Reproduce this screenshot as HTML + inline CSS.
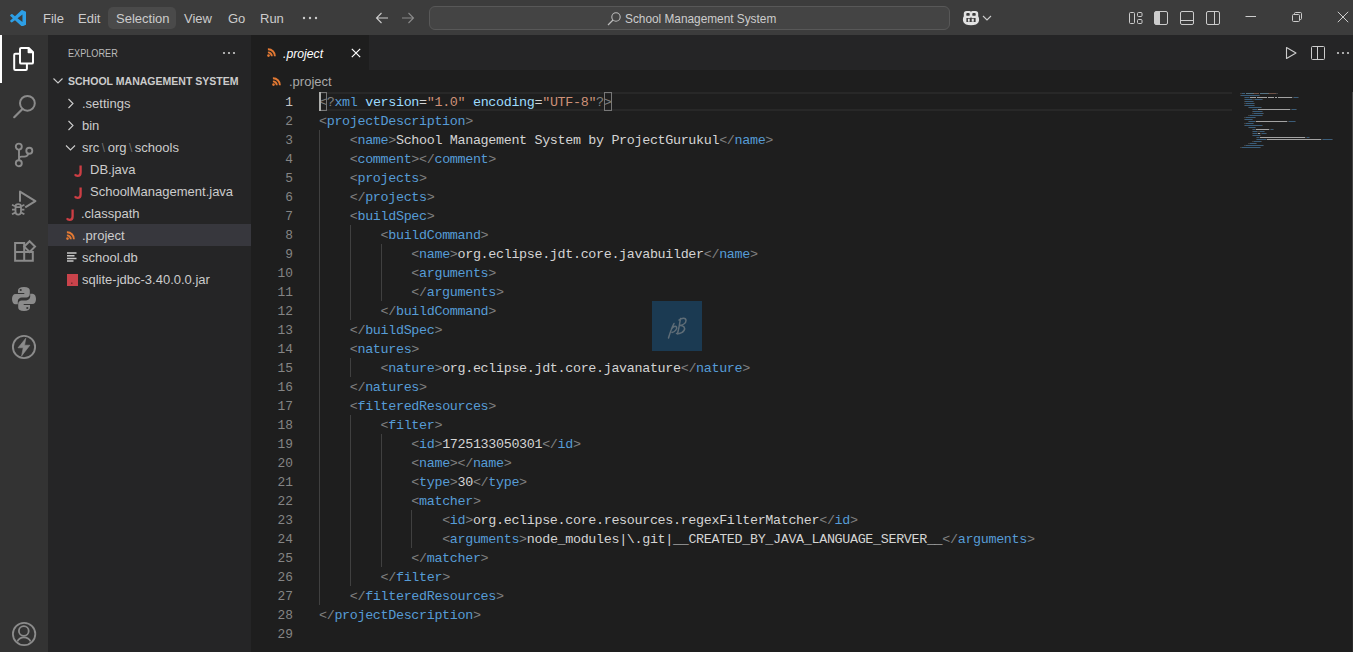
<!DOCTYPE html>
<html><head><meta charset="utf-8">
<style>
*{margin:0;padding:0;box-sizing:border-box}
html,body{width:1353px;height:652px;overflow:hidden;background:#1e1e1e;font-family:"Liberation Sans",sans-serif;}
.abs{position:absolute}
#title{position:absolute;left:0;top:0;width:1353px;height:35px;background:#3c3c3c;color:#cccccc;font-size:13px}
.menu{position:absolute;top:10px;line-height:18px;color:#cccccc}
#act{position:absolute;left:0;top:35px;width:48px;height:617px;background:#333333}
#side{position:absolute;left:48px;top:35px;width:203px;height:617px;background:#252526;color:#cccccc;font-size:13px}
#editor{position:absolute;left:251px;top:35px;width:1102px;height:617px;background:#1e1e1e}
#tabs{position:absolute;left:0;top:0;width:1102px;height:35px;background:#252526}
.row{position:absolute;left:0;width:203px;height:22px;line-height:24px;white-space:nowrap}
#code{position:absolute;left:68px;top:58px;font-family:"Liberation Mono",monospace;font-size:13.4px;letter-spacing:-0.341px;line-height:19px;white-space:pre;color:#d4d4d4}
#code i{font-style:normal}
.p{color:#808080}.t{color:#569cd6}.a{color:#9cdcfe}.e{color:#d4d4d4}.v{color:#ce9178}.x{color:#d4d4d4}
.ln{height:19px}
#nums{position:absolute;left:0;top:58px;width:42px;text-align:right;font-family:"Liberation Mono",monospace;font-size:12.83px;line-height:19px;color:#858585}
#guides{position:absolute;left:68px;top:57px}
.g{position:absolute;width:1px;background:#404040}
#mm{position:absolute;left:989px;top:57px}
#mm div{position:absolute;height:1px;margin-top:0.5px}
</style></head><body>
<div id="title">
  <svg class="abs" style="left:9.5px;top:9.7px" width="16.7" height="16.5" viewBox="0 0 100 100"><path d="M96.46 10.8 75.86.87a6.23 6.23 0 0 0-7.1 1.21L29.55 37.85 12.46 24.88a4.16 4.16 0 0 0-5.32.24L1.63 30.13a4.16 4.16 0 0 0 0 6.16L16.45 49.8 1.63 63.31a4.16 4.16 0 0 0 0 6.16l5.51 5.01a4.16 4.16 0 0 0 5.32.24l17.09-12.97 39.21 35.77a6.22 6.22 0 0 0 7.1 1.21l20.6-9.92A6.25 6.25 0 0 0 100 83.18V16.42a6.25 6.25 0 0 0-3.54-5.62ZM75.01 72.7 45.11 49.8l29.9-22.9v45.8Z" fill="#2d9fe6"/></svg>
  <div class="menu" style="left:43px">File</div>
  <div class="menu" style="left:78px">Edit</div>
  <div class="abs" style="left:108px;top:7px;width:68px;height:22px;border-radius:5px;background:#4a4a4a"></div>
  <div class="menu" style="left:116px">Selection</div>
  <div class="menu" style="left:184px">View</div>
  <div class="menu" style="left:228px">Go</div>
  <div class="menu" style="left:260px">Run</div>
  <svg class="abs" style="left:302px;top:16px" width="16" height="4"><circle cx="2" cy="2" r="1.2" fill="#ccc"/><circle cx="8" cy="2" r="1.2" fill="#ccc"/><circle cx="14" cy="2" r="1.2" fill="#ccc"/></svg>
  <svg class="abs" style="left:374px;top:10px" width="16" height="16" viewBox="0 0 16 16"><path d="M14 8H2.5 M7.5 3 L2.5 8 L7.5 13" stroke="#cccccc" stroke-width="1.1" fill="none"/></svg>
  <svg class="abs" style="left:400px;top:10px" width="16" height="16" viewBox="0 0 16 16"><path d="M2 8H13.5 M8.5 3 L13.5 8 L8.5 13" stroke="#8a8a8a" stroke-width="1.1" fill="none"/></svg>
  <div class="abs" style="left:429px;top:6px;width:521px;height:24px;border-radius:6px;background:#444444;border:1px solid #585858"></div>
  <svg class="abs" style="left:606px;top:11px" width="16" height="16" viewBox="0 0 16 16"><circle cx="10" cy="6" r="4.2" stroke="#bbbbbb" stroke-width="1.1" fill="none"/><path d="M7 9 L2 14" stroke="#bbbbbb" stroke-width="1.2"/></svg>
  <div class="menu" style="left:625px;color:#cccccc;transform:scaleX(0.91);transform-origin:0 0">School Management System</div>
  <svg class="abs" style="left:962px;top:10px" width="18" height="16" viewBox="0 0 18 16"><path fill="#e2e2e2" d="M4.6 0.9H7.4Q9 0.9 9 2.3 9 0.9 10.6 0.9H13.4Q16.2 0.9 16.2 3.7V6.2Q17.1 7.3 17.1 9.6 17.1 13.1 14 14.5 12 15.2 9 15.2 6 15.2 4 14.5 0.9 13.1 0.9 9.6 0.9 7.3 1.8 6.2V3.7Q1.8 0.9 4.6 0.9Z"/><rect x="4.3" y="3" width="3.4" height="2.8" rx="0.9" fill="#3c3c3c"/><rect x="10.3" y="3" width="3.4" height="2.8" rx="0.9" fill="#3c3c3c"/><path d="M4.4 8.1H8.3L9 7 9.7 8.1H13.6V12.1H4.4Z" fill="#3c3c3c"/><rect x="5.9" y="8.7" width="1.8" height="3" fill="#e2e2e2"/><rect x="9.7" y="8.7" width="2.1" height="3" fill="#e2e2e2"/></svg>
  <svg class="abs" style="left:982px;top:14px" width="10" height="8" viewBox="0 0 10 8"><path d="M1 2 L5 6 L9 2" stroke="#cccccc" stroke-width="1.1" fill="none"/></svg>
  <!-- layout icons -->
  <svg class="abs" style="left:1128px;top:10px" width="16" height="16" viewBox="0 0 16 16"><rect x="1.5" y="2.5" width="5" height="11" rx="1" stroke="#cccccc" fill="none"/><rect x="9.5" y="2.5" width="4.5" height="4" rx="1" stroke="#cccccc" fill="none"/><rect x="9.5" y="9.5" width="4.5" height="4" rx="1" stroke="#cccccc" fill="none"/></svg>
  <svg class="abs" style="left:1153px;top:10px" width="16" height="16" viewBox="0 0 16 16"><rect x="1.5" y="1.5" width="13" height="13" rx="1.5" stroke="#cccccc" fill="none"/><rect x="2" y="2" width="4.5" height="12" fill="#cccccc"/><path d="M6.5 2V14" stroke="#cccccc"/></svg>
  <svg class="abs" style="left:1179px;top:10px" width="16" height="16" viewBox="0 0 16 16"><rect x="1.5" y="1.5" width="13" height="13" rx="1.5" stroke="#cccccc" fill="none"/><path d="M2 10.5H14" stroke="#cccccc"/></svg>
  <svg class="abs" style="left:1205px;top:10px" width="16" height="16" viewBox="0 0 16 16"><rect x="1.5" y="1.5" width="13" height="13" rx="1.5" stroke="#cccccc" fill="none"/><path d="M9.5 2V14" stroke="#cccccc"/></svg>
  <svg class="abs" style="left:1245px;top:12px" width="12" height="10"><path d="M0.5 4.5H11" stroke="#cccccc"/></svg>
  <svg class="abs" style="left:1291px;top:11px" width="12" height="12" viewBox="0 0 12 12"><rect x="1.5" y="3.5" width="7" height="7" rx="1" stroke="#cccccc" fill="none"/><path d="M3.5 3.5V2.5C3.5 1.9 3.9 1.5 4.5 1.5H9.5C10.1 1.5 10.5 1.9 10.5 2.5V7.5C10.5 8.1 10.1 8.5 9.5 8.5H8.5" stroke="#cccccc" fill="none"/></svg>
  <svg class="abs" style="left:1337px;top:11px" width="12" height="12" viewBox="0 0 12 12"><path d="M0.8 0.8L11.2 11.2M11.2 0.8L0.8 11.2" stroke="#cccccc" stroke-width="1"/></svg>
</div>

<div id="act">
  <div class="abs" style="left:0;top:0;width:2px;height:48px;background:#ffffff"></div>
  <svg class="abs" style="left:12px;top:11px" width="24" height="26" viewBox="0 0 24 26"><path d="M9.2 1.9H16.6L21 6.3V16.4Q21 17.6 19.8 17.6H9.2Q8 17.6 8 16.4V3.1Q8 1.9 9.2 1.9Z" stroke="#ffffff" stroke-width="2" fill="none" stroke-linejoin="round"/><path d="M16.4 1.9V6.5H21Z" stroke="#ffffff" stroke-width="1.6" fill="#ffffff" stroke-linejoin="round"/><path d="M8 7.8H3.4Q2.2 7.8 2.2 9V22.8Q2.2 24 3.4 24H13.7Q14.9 24 14.9 22.8V17.6" stroke="#ffffff" stroke-width="2" fill="none" stroke-linejoin="round"/></svg>
  <svg class="abs" style="left:12px;top:59px" width="26" height="26" viewBox="0 0 26 26"><circle cx="15.4" cy="9.3" r="7.4" stroke="#8b8b8b" stroke-width="2" fill="none"/><path d="M10.2 15.2L2.2 23.2" stroke="#8b8b8b" stroke-width="2.2" stroke-linecap="round"/></svg>
  <svg class="abs" style="left:12px;top:107px" width="24" height="26" viewBox="0 0 24 26"><circle cx="6.8" cy="4.6" r="3" stroke="#8b8b8b" stroke-width="1.9" fill="none"/><circle cx="17.3" cy="8.8" r="3" stroke="#8b8b8b" stroke-width="1.9" fill="none"/><circle cx="6.8" cy="21.3" r="3" stroke="#8b8b8b" stroke-width="1.9" fill="none"/><path d="M7 7.6V18.3 M16.2 11.6C15.8 13.6 14.5 14.6 12.3 14.6H9.5C8 14.6 7 15.5 7 17" stroke="#8b8b8b" stroke-width="1.9" fill="none"/></svg>
  <svg class="abs" style="left:8px;top:151px" width="32" height="32" viewBox="0 0 32 32"><path d="M12 15.8V5.6L27.4 15.2L17.2 21.4" stroke="#8b8b8b" stroke-width="2" fill="none" stroke-linejoin="round"/><path d="M10.2 18.2C8.4 18.2 7.5 19.2 7.5 20.4V25.5C7.5 27.5 8.7 28.7 10.2 28.7 11.8 28.7 13 27.5 13 25.5V20.4C13 19.2 12 18.2 10.2 18.2Z M7.5 21.2H13" stroke="#8b8b8b" stroke-width="1.8" fill="none"/><path d="M4 18.8L7 20.2 M16.4 18.8L13.4 20.2 M4 23.6H7.3 M16.4 23.6H13.2 M4 28.2L7.2 26.6 M16.4 28.2L13.2 26.6" stroke="#8b8b8b" stroke-width="1.8"/></svg>
  <svg class="abs" style="left:8px;top:201px" width="32" height="32" viewBox="0 0 32 32"><path d="M7.1 7.1H16.2V16H24.8V24.8H7.1Z M7.1 16H16.2V24.8" stroke="#8b8b8b" stroke-width="2" fill="none"/><path d="M21.6 5.2L27 10.6L21.6 16L16.2 10.6Z" stroke="#8b8b8b" stroke-width="2" fill="none" stroke-linejoin="miter"/></svg>
  <svg class="abs" style="left:11px;top:251px" width="26" height="26" viewBox="-1 -1 26 26"><path d="M12 0C8 0 6 1.2 6 3.5V6H12.3V7H3.5C1.3 7 0 9 0 12 0 15 1.3 17.3 3.5 17.3H5.8V14.5C5.8 12.3 7.6 10.6 9.8 10.6H14.3C16.3 10.6 17.8 9.1 17.8 7.1V3.5C17.8 1.2 16 0 12 0Z" fill="#8b8b8b"/><circle cx="8.7" cy="3" r="1.1" fill="#333"/><g transform="rotate(180 12 12)"><path d="M12 0C8 0 6 1.2 6 3.5V6H12.3V7H3.5C1.3 7 0 9 0 12 0 15 1.3 17.3 3.5 17.3H5.8V14.5C5.8 12.3 7.6 10.6 9.8 10.6H14.3C16.3 10.6 17.8 9.1 17.8 7.1V3.5C17.8 1.2 16 0 12 0Z" fill="#8b8b8b"/><circle cx="8.7" cy="3" r="1.1" fill="#333"/></g></svg>
  <svg class="abs" style="left:8px;top:296px" width="32" height="32" viewBox="0 0 32 32"><circle cx="16" cy="16" r="11.1" stroke="#8b8b8b" stroke-width="1.9" fill="none"/><path d="M17.8 7.2L10 16.8H15.2L13.6 25L21.9 14.2H16.6Z" fill="#8b8b8b" stroke="#8b8b8b" stroke-width="0.6" stroke-linejoin="round"/></svg>
  <svg class="abs" style="left:8px;top:583px" width="32" height="32" viewBox="0 0 32 32"><circle cx="16.1" cy="16" r="11.2" stroke="#8b8b8b" stroke-width="1.8" fill="none"/><circle cx="15.8" cy="13" r="4.9" stroke="#8b8b8b" stroke-width="1.8" fill="none"/><path d="M9.3 23.5C10.6 20.6 13.1 19.3 15.9 19.3 18.7 19.3 21.3 20.6 22.6 23.5" stroke="#8b8b8b" stroke-width="1.8" fill="none"/></svg>
</div>

<div id="side">
  <div class="abs" style="left:20px;top:11px;font-size:11px;line-height:14px;color:#bbbbbb;transform:scaleX(0.83);transform-origin:0 0">EXPLORER</div>
  <svg class="abs" style="left:174px;top:16px" width="14" height="4"><circle cx="2" cy="2" r="1.1" fill="#ccc"/><circle cx="7" cy="2" r="1.1" fill="#ccc"/><circle cx="12" cy="2" r="1.1" fill="#ccc"/></svg>
  <svg class="abs" style="left:4px;top:42px" width="12" height="8" viewBox="0 0 12 8"><path d="M1.5 1.5L6 6L10.5 1.5" stroke="#cccccc" stroke-width="1.1" fill="none"/></svg>
  <div class="abs" style="left:20px;top:38px;font-size:11px;line-height:16px;font-weight:bold;color:#cccccc;transform:scaleX(0.957);transform-origin:0 0">SCHOOL MANAGEMENT SYSTEM</div>
  <div class="row" style="top:57px"><svg class="abs" style="left:19px;top:6px" width="8" height="11" viewBox="0 0 8 11"><path d="M1.5 1L6 5.5L1.5 10" stroke="#cccccc" stroke-width="1.1" fill="none"/></svg><span class="abs" style="left:34px">.settings</span></div>
  <div class="row" style="top:79px"><svg class="abs" style="left:19px;top:6px" width="8" height="11" viewBox="0 0 8 11"><path d="M1.5 1L6 5.5L1.5 10" stroke="#cccccc" stroke-width="1.1" fill="none"/></svg><span class="abs" style="left:34px">bin</span></div>
  <div class="row" style="top:101px"><svg class="abs" style="left:17px;top:8px" width="11" height="8" viewBox="0 0 11 8"><path d="M1 1.5L5.5 6L10 1.5" stroke="#cccccc" stroke-width="1.1" fill="none"/></svg><span class="abs" style="left:34px">src<span style="color:#6f6f6f;margin:0 2.5px 0 2.5px;font-size:12px">\</span>org<span style="color:#6f6f6f;margin:0 2.5px 0 2.5px;font-size:12px">\</span>schools</span></div>
  <div class="row" style="top:123px"><svg class="abs" style="left:26px;top:7px" width="10" height="12" viewBox="0 0 10 12"><path d="M6.6 0.6V7.4C6.6 9.6 5.3 10.8 3.6 10.8 2.4 10.8 1.4 10.2 0.9 9.2" stroke="#cc3e44" stroke-width="2.3" fill="none"/></svg><span class="abs" style="left:42px">DB.java</span></div>
  <div class="row" style="top:145px"><svg class="abs" style="left:26px;top:7px" width="10" height="12" viewBox="0 0 10 12"><path d="M6.6 0.6V7.4C6.6 9.6 5.3 10.8 3.6 10.8 2.4 10.8 1.4 10.2 0.9 9.2" stroke="#cc3e44" stroke-width="2.3" fill="none"/></svg><span class="abs" style="left:42px">SchoolManagement.java</span></div>
  <div class="row" style="top:167px"><svg class="abs" style="left:18px;top:7px" width="10" height="12" viewBox="0 0 10 12"><path d="M6.6 0.6V7.4C6.6 9.6 5.3 10.8 3.6 10.8 2.4 10.8 1.4 10.2 0.9 9.2" stroke="#cc3e44" stroke-width="2.3" fill="none"/></svg><span class="abs" style="left:33px">.classpath</span></div>
  <div class="row" style="top:189px;background:#37373d"><svg class="abs" style="left:18px;top:7px" width="9" height="9" viewBox="0 0 9 9"><path d="M0.9 1.3A6.8 6.8 0 0 1 7.9 8.3 M0.9 4.4A3.9 3.9 0 0 1 4.8 8.3" stroke="#e37933" stroke-width="1.9" fill="none"/><circle cx="1.5" cy="7.6" r="1.3" fill="#e37933"/></svg><span class="abs" style="left:34px">.project</span></div>
  <div class="row" style="top:211px"><svg class="abs" style="left:19px;top:6px" width="10" height="11" viewBox="0 0 10 11"><path d="M0 1H9.5 M0 3.7H7.5 M0 6.4H9.5 M0 9.1H6.5" stroke="#c8c8c8" stroke-width="1.5"/></svg><span class="abs" style="left:34px">school.db</span></div>
  <div class="row" style="top:233px"><svg class="abs" style="left:19px;top:6px" width="11" height="12" viewBox="0 0 11 12"><rect x="0" y="0" width="11" height="12" fill="#c9434b"/><rect x="4" y="8.5" width="1.5" height="1.5" fill="#7a2a30"/></svg><span class="abs" style="left:34px">sqlite-jdbc-3.40.0.0.jar</span></div>
</div>

<div id="editor">
  <div id="tabs">
    <div class="abs" style="left:0;top:0;width:118px;height:35px;background:#1e1e1e">
      <svg class="abs" style="left:16px;top:12.5px" width="9" height="9" viewBox="0 0 9 9"><path d="M0.9 1.3A6.8 6.8 0 0 1 7.9 8.3 M0.9 4.4A3.9 3.9 0 0 1 4.8 8.3" stroke="#e37933" stroke-width="1.9" fill="none"/><circle cx="1.5" cy="7.6" r="1.3" fill="#e37933"/></svg>
      <span class="abs" style="left:32px;top:10px;font-size:13px;line-height:18px;font-style:italic;color:#ffffff;transform:scaleX(0.94);transform-origin:0 0">.project</span>
      <svg class="abs" style="left:100px;top:13px" width="10" height="10" viewBox="0 0 10 10"><path d="M0.8 0.8L9.2 9.2M9.2 0.8L0.8 9.2" stroke="#ffffff" stroke-width="1.2"/></svg>
    </div>
    <svg class="abs" style="left:1034px;top:11px" width="12" height="14" viewBox="0 0 12 14"><path d="M1.5 1.5V12.5L11 7Z" stroke="#cccccc" stroke-width="1.1" fill="none" stroke-linejoin="round"/></svg>
    <svg class="abs" style="left:1060px;top:11px" width="14" height="14" viewBox="0 0 14 14"><rect x="0.5" y="0.5" width="13" height="13" rx="1" stroke="#cccccc" fill="none"/><path d="M6.5 1V13" stroke="#cccccc"/></svg>
    <svg class="abs" style="left:1085px;top:16px" width="14" height="4"><circle cx="2" cy="2" r="1.1" fill="#ccc"/><circle cx="7" cy="2" r="1.1" fill="#ccc"/><circle cx="12" cy="2" r="1.1" fill="#ccc"/></svg>
  </div>
  <svg class="abs" style="left:21px;top:42px" width="9" height="9" viewBox="0 0 9 9"><path d="M0.9 1.3A6.8 6.8 0 0 1 7.9 8.3 M0.9 4.4A3.9 3.9 0 0 1 4.8 8.3" stroke="#e37933" stroke-width="1.9" fill="none"/><circle cx="1.5" cy="7.6" r="1.3" fill="#e37933"/></svg>
  <span class="abs" style="left:38px;top:38px;font-size:13px;line-height:18px;color:#a9a9a9">.project</span>
  <!-- current line box -->
  <div class="abs" style="left:68px;top:57px;width:913px;height:19px;border:2px solid #282828;border-left:none;border-right:none"></div>
  <div id="guides"><div class="g" style="left:0px;top:38px;height:475px"></div>
<div class="g" style="left:31px;top:133px;height:95px"></div>
<div class="g" style="left:31px;top:266px;height:19px"></div>
<div class="g" style="left:31px;top:323px;height:171px"></div>
<div class="g" style="left:62px;top:152px;height:57px"></div>
<div class="g" style="left:62px;top:342px;height:133px"></div>
<div class="g" style="left:92px;top:418px;height:38px"></div></div>
  <div id="nums"><div class="ln" style="color:#c6c6c6">1</div><div class="ln">2</div><div class="ln">3</div><div class="ln">4</div><div class="ln">5</div><div class="ln">6</div><div class="ln">7</div><div class="ln">8</div><div class="ln">9</div><div class="ln">10</div><div class="ln">11</div><div class="ln">12</div><div class="ln">13</div><div class="ln">14</div><div class="ln">15</div><div class="ln">16</div><div class="ln">17</div><div class="ln">18</div><div class="ln">19</div><div class="ln">20</div><div class="ln">21</div><div class="ln">22</div><div class="ln">23</div><div class="ln">24</div><div class="ln">25</div><div class="ln">26</div><div class="ln">27</div><div class="ln">28</div><div class="ln">29</div></div>
  <div id="code"><div class="ln"><i class="p">&lt;?</i><i class="t">xml</i> <i class="a">version</i><i class="e">=</i><i class="v">"1.0"</i> <i class="a">encoding</i><i class="e">=</i><i class="v">"UTF-8"</i><i class="p">?&gt;</i></div><div class="ln"><i class="p">&lt;</i><i class="t">projectDescription</i><i class="p">&gt;</i></div><div class="ln">    <i class="p">&lt;</i><i class="t">name</i><i class="p">&gt;</i><i class="x">School Management System by ProjectGurukul</i><i class="p">&lt;/</i><i class="t">name</i><i class="p">&gt;</i></div><div class="ln">    <i class="p">&lt;</i><i class="t">comment</i><i class="p">&gt;&lt;/</i><i class="t">comment</i><i class="p">&gt;</i></div><div class="ln">    <i class="p">&lt;</i><i class="t">projects</i><i class="p">&gt;</i></div><div class="ln">    <i class="p">&lt;/</i><i class="t">projects</i><i class="p">&gt;</i></div><div class="ln">    <i class="p">&lt;</i><i class="t">buildSpec</i><i class="p">&gt;</i></div><div class="ln">        <i class="p">&lt;</i><i class="t">buildCommand</i><i class="p">&gt;</i></div><div class="ln">            <i class="p">&lt;</i><i class="t">name</i><i class="p">&gt;</i><i class="x">org.eclipse.jdt.core.javabuilder</i><i class="p">&lt;/</i><i class="t">name</i><i class="p">&gt;</i></div><div class="ln">            <i class="p">&lt;</i><i class="t">arguments</i><i class="p">&gt;</i></div><div class="ln">            <i class="p">&lt;/</i><i class="t">arguments</i><i class="p">&gt;</i></div><div class="ln">        <i class="p">&lt;/</i><i class="t">buildCommand</i><i class="p">&gt;</i></div><div class="ln">    <i class="p">&lt;/</i><i class="t">buildSpec</i><i class="p">&gt;</i></div><div class="ln">    <i class="p">&lt;</i><i class="t">natures</i><i class="p">&gt;</i></div><div class="ln">        <i class="p">&lt;</i><i class="t">nature</i><i class="p">&gt;</i><i class="x">org.eclipse.jdt.core.javanature</i><i class="p">&lt;/</i><i class="t">nature</i><i class="p">&gt;</i></div><div class="ln">    <i class="p">&lt;/</i><i class="t">natures</i><i class="p">&gt;</i></div><div class="ln">    <i class="p">&lt;</i><i class="t">filteredResources</i><i class="p">&gt;</i></div><div class="ln">        <i class="p">&lt;</i><i class="t">filter</i><i class="p">&gt;</i></div><div class="ln">            <i class="p">&lt;</i><i class="t">id</i><i class="p">&gt;</i><i class="x">1725133050301</i><i class="p">&lt;/</i><i class="t">id</i><i class="p">&gt;</i></div><div class="ln">            <i class="p">&lt;</i><i class="t">name</i><i class="p">&gt;&lt;/</i><i class="t">name</i><i class="p">&gt;</i></div><div class="ln">            <i class="p">&lt;</i><i class="t">type</i><i class="p">&gt;</i><i class="x">30</i><i class="p">&lt;/</i><i class="t">type</i><i class="p">&gt;</i></div><div class="ln">            <i class="p">&lt;</i><i class="t">matcher</i><i class="p">&gt;</i></div><div class="ln">                <i class="p">&lt;</i><i class="t">id</i><i class="p">&gt;</i><i class="x">org.eclipse.core.resources.regexFilterMatcher</i><i class="p">&lt;/</i><i class="t">id</i><i class="p">&gt;</i></div><div class="ln">                <i class="p">&lt;</i><i class="t">arguments</i><i class="p">&gt;</i><i class="x">node_modules|\.git|__CREATED_BY_JAVA_LANGUAGE_SERVER__</i><i class="p">&lt;/</i><i class="t">arguments</i><i class="p">&gt;</i></div><div class="ln">            <i class="p">&lt;/</i><i class="t">matcher</i><i class="p">&gt;</i></div><div class="ln">        <i class="p">&lt;/</i><i class="t">filter</i><i class="p">&gt;</i></div><div class="ln">    <i class="p">&lt;/</i><i class="t">filteredResources</i><i class="p">&gt;</i></div><div class="ln"><i class="p">&lt;/</i><i class="t">projectDescription</i><i class="p">&gt;</i></div><div class="ln"></div></div>
  <div class="abs" style="left:68px;top:57px;width:8px;height:19px;border:1px solid #777"></div><div class="abs" style="left:68px;top:57px;width:2px;height:19px;background:#aeafad"></div>
  <div class="abs" style="left:353px;top:57px;width:8px;height:19px;border:1px solid #777"></div>
  <div class="abs" style="left:1101px;top:57px;width:1px;height:328px;background:#454545"></div><div class="abs" style="left:1101px;top:385px;width:1px;height:232px;background:#2a2a2a"></div>
  <div id="mm"><div style="left:0px;top:0px;width:2px;background:rgba(128,128,128,.35)"></div>
<div style="left:2px;top:0px;width:3px;background:rgba(86,156,214,.5)"></div>
<div style="left:6px;top:0px;width:7px;background:rgba(156,220,254,.45)"></div>
<div style="left:13px;top:0px;width:1px;background:rgba(212,212,212,.45)"></div>
<div style="left:14px;top:0px;width:5px;background:rgba(206,145,120,.45)"></div>
<div style="left:20px;top:0px;width:8px;background:rgba(156,220,254,.45)"></div>
<div style="left:28px;top:0px;width:1px;background:rgba(212,212,212,.45)"></div>
<div style="left:29px;top:0px;width:7px;background:rgba(206,145,120,.45)"></div>
<div style="left:36px;top:0px;width:2px;background:rgba(128,128,128,.35)"></div>
<div style="left:0px;top:2px;width:1px;background:rgba(128,128,128,.35)"></div>
<div style="left:1px;top:2px;width:18px;background:rgba(86,156,214,.5)"></div>
<div style="left:19px;top:2px;width:1px;background:rgba(128,128,128,.35)"></div>
<div style="left:4px;top:4px;width:1px;background:rgba(128,128,128,.35)"></div>
<div style="left:5px;top:4px;width:4px;background:rgba(86,156,214,.5)"></div>
<div style="left:9px;top:4px;width:1px;background:rgba(128,128,128,.35)"></div>
<div style="left:10px;top:4px;width:6px;background:rgba(220,220,220,.7)"></div>
<div style="left:17px;top:4px;width:10px;background:rgba(220,220,220,.7)"></div>
<div style="left:28px;top:4px;width:6px;background:rgba(220,220,220,.7)"></div>
<div style="left:35px;top:4px;width:2px;background:rgba(220,220,220,.7)"></div>
<div style="left:38px;top:4px;width:14px;background:rgba(220,220,220,.7)"></div>
<div style="left:52px;top:4px;width:2px;background:rgba(128,128,128,.35)"></div>
<div style="left:54px;top:4px;width:4px;background:rgba(86,156,214,.5)"></div>
<div style="left:58px;top:4px;width:1px;background:rgba(128,128,128,.35)"></div>
<div style="left:4px;top:6px;width:1px;background:rgba(128,128,128,.35)"></div>
<div style="left:5px;top:6px;width:7px;background:rgba(86,156,214,.5)"></div>
<div style="left:12px;top:6px;width:3px;background:rgba(128,128,128,.35)"></div>
<div style="left:15px;top:6px;width:7px;background:rgba(86,156,214,.5)"></div>
<div style="left:22px;top:6px;width:1px;background:rgba(128,128,128,.35)"></div>
<div style="left:4px;top:8px;width:1px;background:rgba(128,128,128,.35)"></div>
<div style="left:5px;top:8px;width:8px;background:rgba(86,156,214,.5)"></div>
<div style="left:13px;top:8px;width:1px;background:rgba(128,128,128,.35)"></div>
<div style="left:4px;top:10px;width:2px;background:rgba(128,128,128,.35)"></div>
<div style="left:6px;top:10px;width:8px;background:rgba(86,156,214,.5)"></div>
<div style="left:14px;top:10px;width:1px;background:rgba(128,128,128,.35)"></div>
<div style="left:4px;top:12px;width:1px;background:rgba(128,128,128,.35)"></div>
<div style="left:5px;top:12px;width:9px;background:rgba(86,156,214,.5)"></div>
<div style="left:14px;top:12px;width:1px;background:rgba(128,128,128,.35)"></div>
<div style="left:8px;top:14px;width:1px;background:rgba(128,128,128,.35)"></div>
<div style="left:9px;top:14px;width:12px;background:rgba(86,156,214,.5)"></div>
<div style="left:21px;top:14px;width:1px;background:rgba(128,128,128,.35)"></div>
<div style="left:12px;top:16px;width:1px;background:rgba(128,128,128,.35)"></div>
<div style="left:13px;top:16px;width:4px;background:rgba(86,156,214,.5)"></div>
<div style="left:17px;top:16px;width:1px;background:rgba(128,128,128,.35)"></div>
<div style="left:18px;top:16px;width:32px;background:rgba(220,220,220,.7)"></div>
<div style="left:50px;top:16px;width:2px;background:rgba(128,128,128,.35)"></div>
<div style="left:52px;top:16px;width:4px;background:rgba(86,156,214,.5)"></div>
<div style="left:56px;top:16px;width:1px;background:rgba(128,128,128,.35)"></div>
<div style="left:12px;top:18px;width:1px;background:rgba(128,128,128,.35)"></div>
<div style="left:13px;top:18px;width:9px;background:rgba(86,156,214,.5)"></div>
<div style="left:22px;top:18px;width:1px;background:rgba(128,128,128,.35)"></div>
<div style="left:12px;top:20px;width:2px;background:rgba(128,128,128,.35)"></div>
<div style="left:14px;top:20px;width:9px;background:rgba(86,156,214,.5)"></div>
<div style="left:23px;top:20px;width:1px;background:rgba(128,128,128,.35)"></div>
<div style="left:8px;top:22px;width:2px;background:rgba(128,128,128,.35)"></div>
<div style="left:10px;top:22px;width:12px;background:rgba(86,156,214,.5)"></div>
<div style="left:22px;top:22px;width:1px;background:rgba(128,128,128,.35)"></div>
<div style="left:4px;top:24px;width:2px;background:rgba(128,128,128,.35)"></div>
<div style="left:6px;top:24px;width:9px;background:rgba(86,156,214,.5)"></div>
<div style="left:15px;top:24px;width:1px;background:rgba(128,128,128,.35)"></div>
<div style="left:4px;top:26px;width:1px;background:rgba(128,128,128,.35)"></div>
<div style="left:5px;top:26px;width:7px;background:rgba(86,156,214,.5)"></div>
<div style="left:12px;top:26px;width:1px;background:rgba(128,128,128,.35)"></div>
<div style="left:8px;top:28px;width:1px;background:rgba(128,128,128,.35)"></div>
<div style="left:9px;top:28px;width:6px;background:rgba(86,156,214,.5)"></div>
<div style="left:15px;top:28px;width:1px;background:rgba(128,128,128,.35)"></div>
<div style="left:16px;top:28px;width:31px;background:rgba(220,220,220,.7)"></div>
<div style="left:47px;top:28px;width:2px;background:rgba(128,128,128,.35)"></div>
<div style="left:49px;top:28px;width:6px;background:rgba(86,156,214,.5)"></div>
<div style="left:55px;top:28px;width:1px;background:rgba(128,128,128,.35)"></div>
<div style="left:4px;top:30px;width:2px;background:rgba(128,128,128,.35)"></div>
<div style="left:6px;top:30px;width:7px;background:rgba(86,156,214,.5)"></div>
<div style="left:13px;top:30px;width:1px;background:rgba(128,128,128,.35)"></div>
<div style="left:4px;top:32px;width:1px;background:rgba(128,128,128,.35)"></div>
<div style="left:5px;top:32px;width:17px;background:rgba(86,156,214,.5)"></div>
<div style="left:22px;top:32px;width:1px;background:rgba(128,128,128,.35)"></div>
<div style="left:8px;top:34px;width:1px;background:rgba(128,128,128,.35)"></div>
<div style="left:9px;top:34px;width:6px;background:rgba(86,156,214,.5)"></div>
<div style="left:15px;top:34px;width:1px;background:rgba(128,128,128,.35)"></div>
<div style="left:12px;top:36px;width:1px;background:rgba(128,128,128,.35)"></div>
<div style="left:13px;top:36px;width:2px;background:rgba(86,156,214,.5)"></div>
<div style="left:15px;top:36px;width:1px;background:rgba(128,128,128,.35)"></div>
<div style="left:16px;top:36px;width:13px;background:rgba(220,220,220,.7)"></div>
<div style="left:29px;top:36px;width:2px;background:rgba(128,128,128,.35)"></div>
<div style="left:31px;top:36px;width:2px;background:rgba(86,156,214,.5)"></div>
<div style="left:33px;top:36px;width:1px;background:rgba(128,128,128,.35)"></div>
<div style="left:12px;top:38px;width:1px;background:rgba(128,128,128,.35)"></div>
<div style="left:13px;top:38px;width:4px;background:rgba(86,156,214,.5)"></div>
<div style="left:17px;top:38px;width:3px;background:rgba(128,128,128,.35)"></div>
<div style="left:20px;top:38px;width:4px;background:rgba(86,156,214,.5)"></div>
<div style="left:24px;top:38px;width:1px;background:rgba(128,128,128,.35)"></div>
<div style="left:12px;top:40px;width:1px;background:rgba(128,128,128,.35)"></div>
<div style="left:13px;top:40px;width:4px;background:rgba(86,156,214,.5)"></div>
<div style="left:17px;top:40px;width:1px;background:rgba(128,128,128,.35)"></div>
<div style="left:18px;top:40px;width:2px;background:rgba(220,220,220,.7)"></div>
<div style="left:20px;top:40px;width:2px;background:rgba(128,128,128,.35)"></div>
<div style="left:22px;top:40px;width:4px;background:rgba(86,156,214,.5)"></div>
<div style="left:26px;top:40px;width:1px;background:rgba(128,128,128,.35)"></div>
<div style="left:12px;top:42px;width:1px;background:rgba(128,128,128,.35)"></div>
<div style="left:13px;top:42px;width:7px;background:rgba(86,156,214,.5)"></div>
<div style="left:20px;top:42px;width:1px;background:rgba(128,128,128,.35)"></div>
<div style="left:16px;top:44px;width:1px;background:rgba(128,128,128,.35)"></div>
<div style="left:17px;top:44px;width:2px;background:rgba(86,156,214,.5)"></div>
<div style="left:19px;top:44px;width:1px;background:rgba(128,128,128,.35)"></div>
<div style="left:20px;top:44px;width:45px;background:rgba(220,220,220,.7)"></div>
<div style="left:65px;top:44px;width:2px;background:rgba(128,128,128,.35)"></div>
<div style="left:67px;top:44px;width:2px;background:rgba(86,156,214,.5)"></div>
<div style="left:69px;top:44px;width:1px;background:rgba(128,128,128,.35)"></div>
<div style="left:16px;top:46px;width:1px;background:rgba(128,128,128,.35)"></div>
<div style="left:17px;top:46px;width:9px;background:rgba(86,156,214,.5)"></div>
<div style="left:26px;top:46px;width:1px;background:rgba(128,128,128,.35)"></div>
<div style="left:27px;top:46px;width:54px;background:rgba(220,220,220,.7)"></div>
<div style="left:81px;top:46px;width:2px;background:rgba(128,128,128,.35)"></div>
<div style="left:83px;top:46px;width:9px;background:rgba(86,156,214,.5)"></div>
<div style="left:92px;top:46px;width:1px;background:rgba(128,128,128,.35)"></div>
<div style="left:12px;top:48px;width:2px;background:rgba(128,128,128,.35)"></div>
<div style="left:14px;top:48px;width:7px;background:rgba(86,156,214,.5)"></div>
<div style="left:21px;top:48px;width:1px;background:rgba(128,128,128,.35)"></div>
<div style="left:8px;top:50px;width:2px;background:rgba(128,128,128,.35)"></div>
<div style="left:10px;top:50px;width:6px;background:rgba(86,156,214,.5)"></div>
<div style="left:16px;top:50px;width:1px;background:rgba(128,128,128,.35)"></div>
<div style="left:4px;top:52px;width:2px;background:rgba(128,128,128,.35)"></div>
<div style="left:6px;top:52px;width:17px;background:rgba(86,156,214,.5)"></div>
<div style="left:23px;top:52px;width:1px;background:rgba(128,128,128,.35)"></div>
<div style="left:0px;top:54px;width:2px;background:rgba(128,128,128,.35)"></div>
<div style="left:2px;top:54px;width:18px;background:rgba(86,156,214,.5)"></div>
<div style="left:20px;top:54px;width:1px;background:rgba(128,128,128,.35)"></div></div>
  <div class="abs" style="left:401px;top:266px;width:50px;height:50px;background:#1b3a52"><svg class="abs" style="left:0;top:0" width="50" height="50" viewBox="0 0 50 50"><path d="M16.5 37C18 32 20 26 22 22.5 M19.5 28C21 25.5 23.5 24.5 24.5 26 25.5 27.5 23 31 20 31.5 M28.5 17.5C27.5 24 26.5 29 25.5 33 M27 19C30 16.5 34 16.5 34 19.5 34 22 31 24 28 24.5 32 24.5 33.5 27 32 29.5 30.5 32 27 33 24.5 32.5" stroke="#5f6d77" stroke-width="1.5" fill="none" stroke-linecap="round"/></svg></div>
</div>
</body></html>
